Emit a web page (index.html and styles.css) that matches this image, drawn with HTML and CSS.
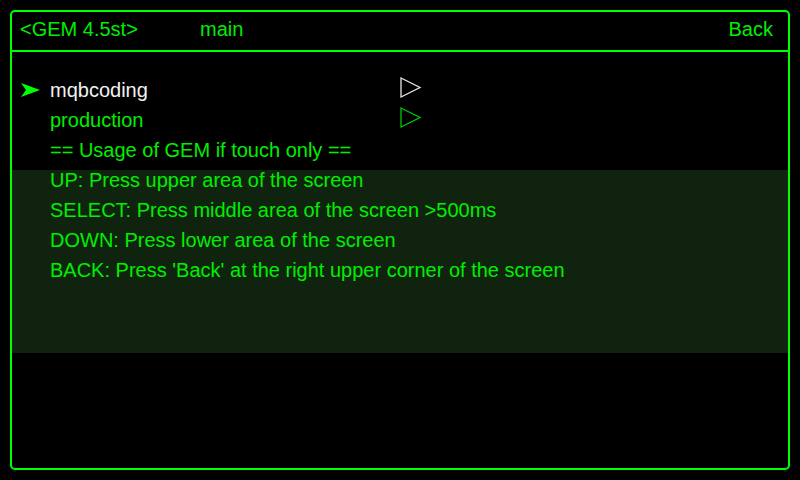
FILE: index.html
```html
<!DOCTYPE html>
<html>
<head>
<meta charset="utf-8">
<link rel="stylesheet" href="styles.css">
</head>
<body>
<div class="frame">
  <header class="header">
    <span class="version">&lt;GEM 4.5st&gt;</span>
    <span class="title">main</span>
    <span class="back">Back</span>
  </header>
  <main class="content">
    <ul class="menu">
      <li class="row selected">
        <span class="marker"><svg width="20" height="16" viewBox="0 0 20 16"><polygon points="0,0 19,7 0,14 5,7" fill="#00ff00"/></svg></span>
        <span class="label">mqbcoding</span>
        <svg class="tri" width="22" height="22" viewBox="0 0 22 22"><polygon points="1,1 20,10.5 1,20" fill="none" stroke="#e6e6e6" stroke-width="1.3"/></svg>
      </li>
      <li class="row">
        <span class="marker"></span>
        <span class="label">production</span>
        <svg class="tri" width="22" height="22" viewBox="0 0 22 22"><polygon points="1,1 20,10.5 1,20" fill="none" stroke="#00c800" stroke-width="1.3"/></svg>
      </li>
      <li class="row">
        <span class="marker"></span>
        <span class="label wide">== Usage of GEM if touch only ==</span>
      </li>
    </ul>
    <div class="help">
      <p>UP: Press upper area of the screen</p>
      <p>SELECT: Press middle area of the screen &gt;500ms</p>
      <p>DOWN: Press lower area of the screen</p>
      <p>BACK: Press 'Back' at the right upper corner of the screen</p>
    </div>
  </main>
</div>
</body>
</html>
```

FILE: styles.css
```css
* { box-sizing: border-box; }
html, body { margin: 0; padding: 0; }
body {
  width: 800px;
  height: 480px;
  background: #000;
  font-family: "Liberation Sans", Arial, sans-serif;
  font-size: 20px;
  color: #00ee00;
  padding: 10px;
  overflow: hidden;
}
.frame {
  width: 780px;
  height: 460px;
  border: 2px solid #00ff00;
  border-radius: 5px;
  display: flex;
  flex-direction: column;
}
.header {
  display: flex;
  align-items: flex-start;
  height: 40px;
  border-bottom: 2px solid #00ff00;
  line-height: 34px;
  padding: 0 15px 4px 8px;
}
.version { width: 180px; }
.title { flex: 1; }
.back { }
.content {
  padding-top: 23px;
  display: flex;
  flex-direction: column;
}
.menu {
  list-style: none;
  margin: 0;
  padding: 0;
}
.row {
  display: grid;
  grid-template-columns: 38px 350px 22px;
  height: 30px;
  line-height: 30px;
  white-space: nowrap;
}
.marker {
  display: flex;
  align-items: flex-start;
  padding: 8px 0 0 9px;
}
.marker svg { display: block; }
.selected .label { color: #f2f2f2; }
.tri { display: block; margin-top: 2px; }
.help {
  margin-top: 5px;
  background: #10230f;
  height: 183px;
  padding: 0 0 0 38px;
  display: flex;
  flex-direction: column;
  gap: 10px;
}
.help p {
  margin: 0;
  line-height: 20px;
  white-space: nowrap;
}
```
